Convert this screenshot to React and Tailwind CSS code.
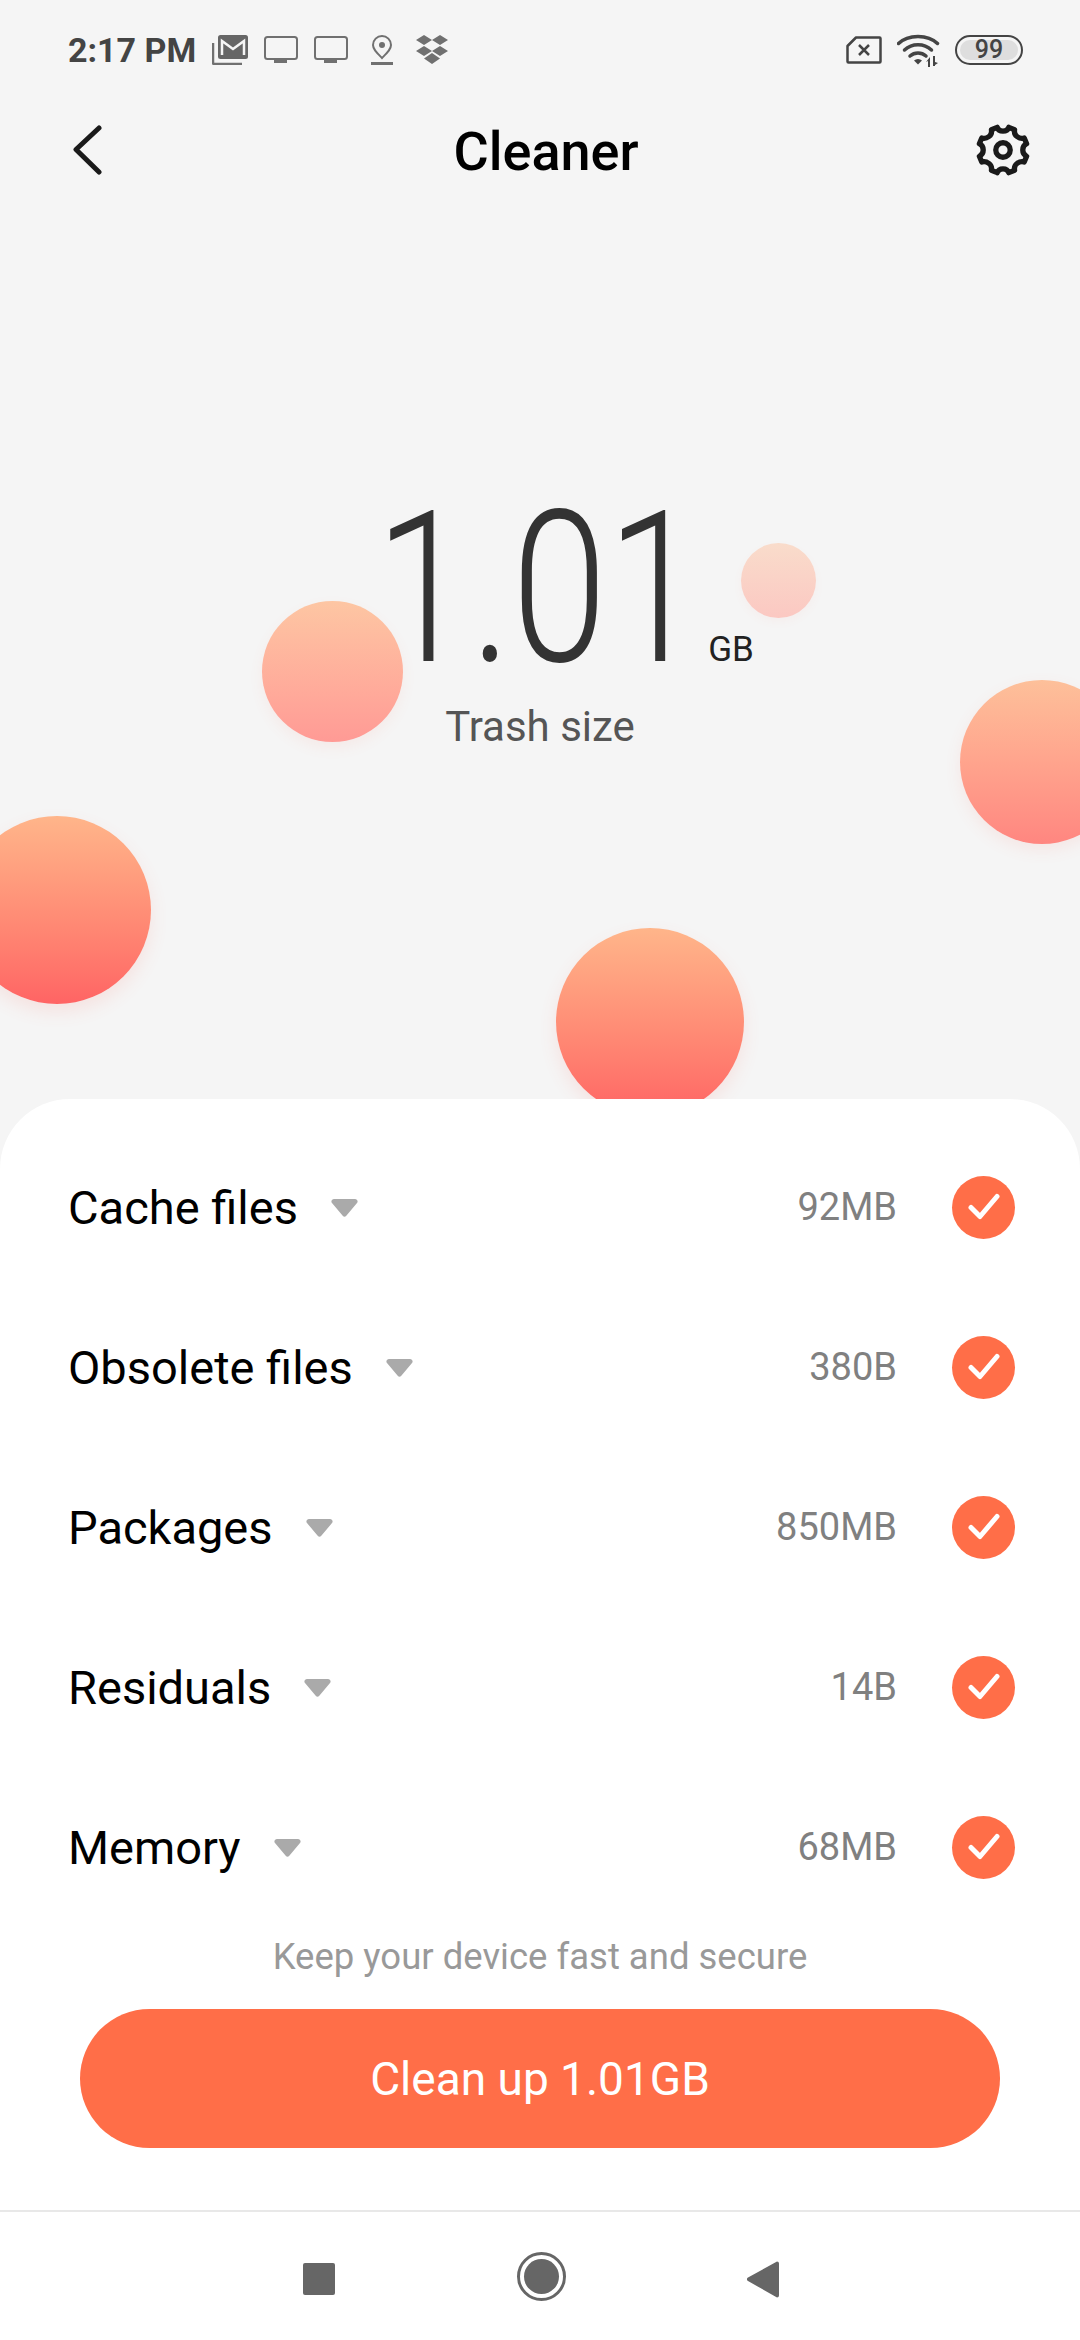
const rows = [
  { name: "Cache files", size: "92MB" },
  { name: "Obsolete files", size: "380B" },
  { name: "Packages", size: "850MB" },
  { name: "Residuals", size: "14B" },
  { name: "Memory", size: "68MB" },
];

function Monitor() {
  return (
    <svg width="34" height="28" viewBox="0 0 34 28" fill="none">
      <rect x="1" y="1" width="32" height="22" rx="2.5" stroke="#707070" strokeWidth="2" />
      <rect x="10" y="23" width="13" height="4" fill="#707070" />
    </svg>
  );
}

function StatusBar() {
  return (
    <div className="flex h-[98px] items-center justify-between pl-[68px] pr-[57px] pt-[1px]">
      <div className="flex items-center">
        <span className="text-[34px] leading-none font-bold text-[#444444]">2:17 PM</span>
        <svg className="ml-[16px]" width="36" height="30" viewBox="0 0 36 30" fill="none">
          <path d="M1 8v19.5a1.5 1.5 0 0 0 1.500 1.500H30" stroke="#707070" strokeWidth="2.500" />
          <rect x="6" y="0" width="30" height="24" rx="2.500" fill="#666666" />
          <path d="M10 20V6l11 8 11-8v14" stroke="#f5f5f5" strokeWidth="2.500" fill="none" />
        </svg>
        <div className="ml-[16px] flex"><Monitor /></div>
        <div className="ml-[16px] flex"><Monitor /></div>
        <svg className="ml-[23px]" width="22" height="30" viewBox="0 0 22 30" fill="none">
          <path d="M11 23C6 18 2 14.500 2 10a9 9 0 0 1 18 0c0 4.500-4 8-9 13z" stroke="#707070" strokeWidth="2" />
          <circle cx="11" cy="10" r="3" fill="#707070" />
          <rect x="0" y="27" width="22" height="3" fill="#707070" />
        </svg>
        <svg className="ml-[22px]" width="34" height="29" viewBox="0 0 34 29" fill="#707070">
          <path d="M9 0l8 5-8 5-8-5zM25 0l8 5-8 5-8-5zM9 11l8 5-8 5-8-5zM25 11l8 5-8 5-8-5zM17 18l8 5.500-8 5.500-8-5.500z" />
        </svg>
      </div>
      <div className="flex items-center">
        <svg width="36" height="28" viewBox="0 0 36 28" fill="none">
          <path d="M10 1.500h23.500a1 1 0 0 1 1 1v23a1 1 0 0 1-1 1H2.500a1 1 0 0 1-1-1V10z" stroke="#444444" strokeWidth="2.500" strokeLinejoin="round" />
          <path d="M13 9l10 10M23 9L13 19" stroke="#444444" strokeWidth="2.500" />
        </svg>
        <svg className="ml-[15px]" width="43" height="34" viewBox="0 0 43 34" fill="none">
          <path d="M1.500 10.500C11 1 31 1 40.500 10.500" stroke="#444444" strokeWidth="3.500" strokeLinecap="round" />
          <path d="M7.500 17C15 10 27 10 34.500 17" stroke="#444444" strokeWidth="3.500" strokeLinecap="round" />
          <path d="M13 23C17.500 19 24.500 19 29 23" stroke="#444444" strokeWidth="3.500" strokeLinecap="round" />
          <path d="M17 27.500a6 6 0 0 1 8 0L21 31.500z" fill="#444444" />
          <path d="M33 24v10h-2v-6l-2 1zM36 23h2v6l3 1-3 2v1h-2z" fill="#444444" />
        </svg>
        <div className="ml-[15px] flex h-[30px] w-[68px] items-center justify-center rounded-full border-[2.5px] border-[#444444] p-[3px]">
          <div className="flex h-full w-full items-center justify-center rounded-full bg-[#dedede] text-[25px] leading-none font-medium text-[#444444]">99</div>
        </div>
      </div>
    </div>
  );
}

function Header() {
  return (
    <div className="flex h-[104px] items-center justify-between pl-[72px] pr-[50px]">
      <svg width="30" height="50" viewBox="0 0 30 50" fill="none">
        <path d="M27 3L4 24.500 27 47" stroke="#1a1a1a" strokeWidth="5" strokeLinecap="round" strokeLinejoin="round" />
      </svg>
      <h1 className="ml-[14px] mt-[3px] text-[54px] leading-none font-medium text-black">Cleaner</h1>
      <svg width="54" height="54" viewBox="0 0 56 56" fill="none" stroke="#1a1a1a" strokeWidth="5.500" strokeLinejoin="round">
        <path d="M22 4.500c1 3 3.500 4 6 4s5-1 6-4l6 2.500c-.5 3 .500 5.500 2.500 7s4.500 2.500 7.500 1.500l2.500 6c-3 1.500-4 3.500-4 6.500s1 5 4 6.500l-2.500 6c-3-1-5.500 0-7.500 1.500s-3 4-2.500 7l-6 2.500c-1-3-3.500-4-6-4s-5 1-6 4l-6-2.500c.5-3-.5-5.500-2.500-7s-4.500-2.500-7.500-1.500l-2.500-6c3-1.500 4-3.500 4-6.500s-1-5-4-6.500l2.500-6c3 1 5.500 0 7.500-1.500s3-4 2.500-7z" />
        <circle cx="28" cy="28" r="7.500" />
      </svg>
    </div>
  );
}

function Bubbles() {
  return (
    <>
      <div className="absolute left-[741px] top-[543px] h-[75px] w-[75px] rounded-full bg-gradient-to-b from-[#f9dccb] to-[#fbc8c2] shadow-[0_4px_10px_rgba(255,110,90,0.05)]" />
      <div className="absolute left-[262px] top-[601px] h-[141px] w-[141px] rounded-full bg-gradient-to-b from-[#fdc6a3] to-[#ff9a95] shadow-[0_6px_14px_rgba(255,110,90,0.08)]" />
      <div className="absolute left-[960px] top-[680px] h-[164px] w-[164px] rounded-full bg-gradient-to-b from-[#fdc09a] to-[#ff8680] shadow-[0_6px_16px_rgba(255,110,90,0.1)]" />
      <div className="absolute left-[-37px] top-[816px] h-[188px] w-[188px] rounded-full bg-gradient-to-b from-[#ffb58a] to-[#ff6464] shadow-[0_8px_18px_rgba(255,100,80,0.12)]" />
      <div className="absolute left-[556px] top-[928px] h-[188px] w-[188px] rounded-full bg-gradient-to-b from-[#ffb58a] to-[#ff6464] shadow-[0_8px_18px_rgba(255,100,80,0.12)]" />
    </>
  );
}

function Hero() {
  return (
    <div className="relative z-10 flex h-[897px] flex-col items-center pt-[287px]">
      <div className="ml-[58px] flex items-baseline">
        <span className="flex w-[297px] justify-center pl-[12px]">
          <span className="inline-block scale-x-[0.81] whitespace-nowrap text-[212px] leading-[200px] font-[340] text-[#333333]">1.01</span>
        </span>
        <span className="ml-[27px] text-[35px] leading-none text-[#222222]">GB</span>
      </div>
      <div className="mt-[17px] text-[42px] leading-none text-[#555555]">Trash size</div>
    </div>
  );
}

function Row({ name, size }) {
  return (
    <div className="flex h-[160px] items-center pl-[68px] pr-[65px]">
      <span className="text-[47px] leading-none text-black">{name}</span>
      <svg className="ml-[33px] mt-[2px]" width="27" height="18" viewBox="0 0 27 18" fill="#aaaaaa">
        <path d="M3 0h21a2.500 2.500 0 0 1 1.800 4.300l-10.500 12.500a2.500 2.500 0 0 1-3.600 0L1.200 4.300A2.500 2.500 0 0 1 3 0z" />
      </svg>
      <span className="ml-auto text-[38px] leading-none text-[#808080]">{size}</span>
      <div className="ml-[55px] flex h-[63px] w-[63px] items-center justify-center rounded-full bg-[#ff6e48]">
        <svg width="32" height="28" viewBox="0 0 32 28" fill="none">
          <path d="M3 14.500L12 23.500 29 3.500" stroke="#ffffff" strokeWidth="5" strokeLinecap="round" strokeLinejoin="round" />
        </svg>
      </div>
    </div>
  );
}

export default function App() {
  return (
    <div className="relative h-[2340px] w-[1080px] overflow-hidden bg-[#f5f5f5] font-['Roboto',sans-serif]">
      <Bubbles />
      <StatusBar />
      <Header />
      <Hero />
      <div className="relative z-20 flex h-[1241px] flex-col rounded-t-[70px] bg-white pt-[28px]">
        {rows.map((row) => (
          <Row key={row.name} name={row.name} size={row.size} />
        ))}
        <div className="flex h-[60px] items-center justify-center text-[36.5px] leading-none text-[#999999]">Keep your device fast and secure</div>
        <button className="mx-[80px] mt-[22px] flex h-[139px] items-center justify-center rounded-full bg-[#ff6e48] text-[46px] leading-none text-white">Clean up 1.01GB</button>
        <div className="mt-[62px] flex flex-1 items-center justify-between border-t-2 border-[#e8e8e8] pl-[303px] pr-[301px]">
          <div className="mt-[6px] h-[32px] w-[32px] rounded-[2px] bg-[#666666]" />
          <div className="flex h-[49px] w-[49px] items-center justify-center rounded-full border-[3.500px] border-[#666666]">
            <div className="h-[35px] w-[35px] rounded-full bg-[#666666]" />
          </div>
          <svg className="mt-[6px]" width="32" height="37" viewBox="0 0 32 37" fill="#666666">
            <path d="M30 0.500a2 2 0 0 1 2 2v32a2 2 0 0 1-2 2L1 20a2 2 0 0 1 0-3.500z" />
          </svg>
        </div>
      </div>
    </div>
  );
}
